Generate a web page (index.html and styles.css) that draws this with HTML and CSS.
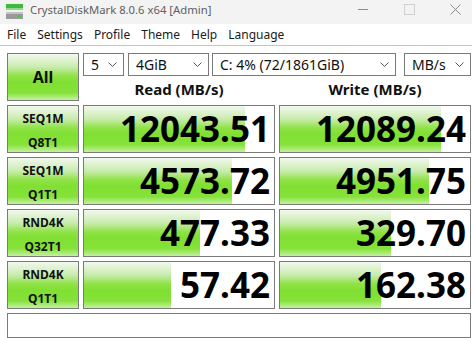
FILE: index.html
```html
<!DOCTYPE html>
<html lang="en">
<head>
    <meta charset="UTF-8">
    <title>CrystalDiskMark 8.0.6 x64 [Admin]</title>
    <link rel="stylesheet" href="styles.css">
</head>
<body>
    <!-- Title bar -->
    <div class="titlebar">
        <svg class="app-icon" width="17" height="16" viewBox="0 0 17 16">
            <rect x="0" y="0" width="17" height="4" fill="#3dba3d"/>
            <rect x="0" y="4" width="17" height="2" fill="#8fd98f"/>
            <rect x="0" y="8" width="17" height="7" fill="#9a9a9a"/>
            <rect x="0" y="8" width="17" height="2" fill="#c4c4c4"/>
            <rect x="12" y="11" width="3" height="2" fill="#44c844"/>
        </svg>
        <span class="title">CrystalDiskMark 8.0.6 x64 [Admin]</span>
        <div class="win-controls">
            <svg width="11" height="11" viewBox="0 0 11 11"><path d="M0 5.5H10" stroke="#8c8c8c" stroke-width="1"/></svg>
            <svg width="11" height="11" viewBox="0 0 11 11"><rect x="0.5" y="0.5" width="10" height="10" fill="none" stroke="#d0d0d0"/></svg>
            <svg width="11" height="11" viewBox="0 0 11 11"><path d="M0.5 0.5L10.5 10.5M10.5 0.5L0.5 10.5" stroke="#8c8c8c" stroke-width="1"/></svg>
        </div>
    </div>

    <!-- Menu -->
    <div class="menubar">
        <span>File</span>
        <span>Settings</span>
        <span>Profile</span>
        <span>Theme</span>
        <span>Help</span>
        <span>Language</span>
    </div>

    <div class="main">
        <div class="btn btn-all">All</div>

        <div class="top-area">
            <div class="selects">
                <div class="select s-count">5<svg viewBox="0 0 9 5"><path d="M0.5 0.5L4.5 4.5L8.5 0.5" fill="none" stroke="#555"/></svg></div>
                <div class="select s-size">4GiB<svg viewBox="0 0 9 5"><path d="M0.5 0.5L4.5 4.5L8.5 0.5" fill="none" stroke="#555"/></svg></div>
                <div class="select s-drive">C: 4% (72/1861GiB)<svg viewBox="0 0 9 5"><path d="M0.5 0.5L4.5 4.5L8.5 0.5" fill="none" stroke="#555"/></svg></div>
                <div class="select s-unit">MB/s<svg viewBox="0 0 9 5"><path d="M0.5 0.5L4.5 4.5L8.5 0.5" fill="none" stroke="#555"/></svg></div>
            </div>
            <div class="headers">
                <div>Read (MB/s)</div>
                <div>Write (MB/s)</div>
            </div>
        </div>

        <div class="btn btn-test">SEQ1M<br>Q8T1</div>
        <div class="result" style="--fill: 161px">12043.51</div>
        <div class="result" style="--fill: 161px">12089.24</div>

        <div class="btn btn-test">SEQ1M<br>Q1T1</div>
        <div class="result" style="--fill: 148px">4573.72</div>
        <div class="result" style="--fill: 149px">4951.75</div>

        <div class="btn btn-test">RND4K<br>Q32T1</div>
        <div class="result" style="--fill: 116px">477.33</div>
        <div class="result" style="--fill: 111px">329.70</div>

        <div class="btn btn-test">RND4K<br>Q1T1</div>
        <div class="result" style="--fill: 87px">57.42</div>
        <div class="result" style="--fill: 101px">162.38</div>

        <div class="status"></div>
    </div>
</body>
</html>
```

FILE: styles.css
```css
body {
    margin: 0;
    font-family: "Noto Sans", "DejaVu Sans", sans-serif;
    background-color: white;
    color: #111;
    width: 472px;
    height: 338px;
    overflow: hidden;
}

.titlebar {
    height: 24px;
    background-color: #f3f3f3;
    display: flex;
    align-items: flex-start;
    padding-left: 6px;
}

.app-icon {
    margin-top: 4px;
}

.title {
    margin-left: 7px;
    margin-top: 2px;
    font-size: 11.3px;
    color: #606060;
    line-height: 16px;
}

.win-controls {
    margin-left: auto;
    display: flex;
    gap: 35px;
    padding-right: 11px;
    margin-top: 4px;
}

.menubar {
    height: 21px;
    border-bottom: 1px solid #c4c4c4;
    display: flex;
    gap: 11px;
    padding-left: 7px;
    font-size: 12px;
    line-height: 22px;
    color: #1a1a1a;
}

.main {
    display: grid;
    grid-template-columns: 72px 192px 192px;
    grid-template-rows: 48px 48px 48px 48px 48px 25px;
    gap: 4px;
    padding: 7px 0 0 7px;
}

.btn {
    box-sizing: border-box;
    border: 1px solid #7a7a7a;
    background: linear-gradient(to bottom, #f2f8ee 0%, #c9ecae 28%, #8fe246 48%, #80e032 62%, #86e23a 84%, #c4f1a2 100%);
    font-weight: bold;
    text-align: center;
    color: #111;
}

.btn-all {
    font-size: 16px;
    line-height: 46px;
}

.btn-test {
    font-size: 12px;
    line-height: 24px;
    padding-top: 1px;
}

.top-area {
    grid-column: 2 / 4;
    display: flex;
    flex-direction: column;
}

.selects {
    display: flex;
    height: 23px;
}

.select {
    box-sizing: border-box;
    height: 23px;
    border: 1px solid #7a7a7a;
    background: white;
    font-size: 14px;
    line-height: 20px;
    padding-left: 7px;
    display: flex;
    align-items: center;
    justify-content: space-between;
    padding-right: 6px;
    color: #111;
}

.select svg {
    width: 9px;
    height: 5px;
}

.s-count { width: 41px; }
.s-size { width: 81px; margin-left: 4px; }
.s-drive { width: 184px; margin-left: 3px; }
.s-unit { width: 67px; margin-left: 8px; }

.headers {
    display: grid;
    grid-template-columns: 192px 192px;
    column-gap: 4px;
    font-size: 15px;
    font-weight: bold;
    text-align: center;
    line-height: 24px;
    padding-top: 1px;
}

.result {
    box-sizing: border-box;
    border: 1px solid #7a7a7a;
    background-color: white;
    background-image: linear-gradient(to bottom, #f2f8ee 0%, #c9ecae 28%, #8fe246 48%, #80e032 62%, #86e23a 84%, #c4f1a2 100%);
    background-size: var(--fill) 100%;
    background-repeat: no-repeat;
    font-size: 35px;
    font-weight: bold;
    text-align: right;
    padding-right: 4px;
    line-height: 46px;
    color: #000;
}

.status {
    grid-column: 1 / 4;
    box-sizing: border-box;
    border: 1px solid #7a7a7a;
    background: white;
}
```
